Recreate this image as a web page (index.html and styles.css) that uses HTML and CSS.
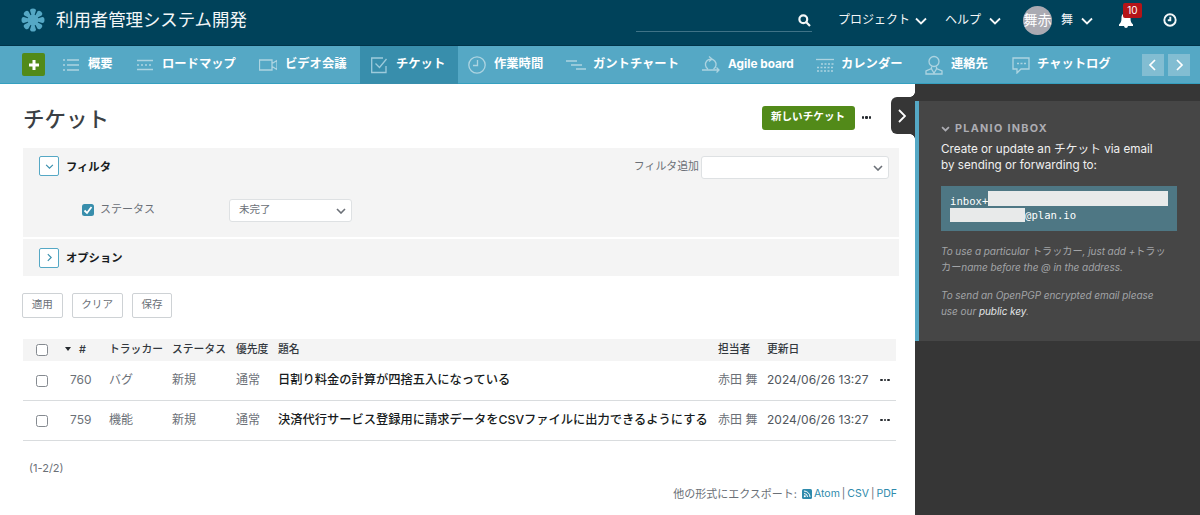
FILE: index.html
```html
<!DOCTYPE html>
<html lang="ja">
<head>
    <meta charset="UTF-8">
    <meta name="viewport" content="width=device-width, initial-scale=1.0">
    <title>チケット - 利用者管理システム開発</title>
    <link rel="stylesheet" href="styles.css">
</head>
<body>
    <header class="top-bar">
        <svg class="logo" viewBox="0 0 24 24">
            <path id="petal" d="M12 12L9.100 2.800Q9 .5 12 .5Q15 .5 14.900 2.800Z"/>
            <use href="#petal" transform="rotate(45 12 12)"/>
            <use href="#petal" transform="rotate(90 12 12)"/>
            <use href="#petal" transform="rotate(135 12 12)"/>
            <use href="#petal" transform="rotate(180 12 12)"/>
            <use href="#petal" transform="rotate(225 12 12)"/>
            <use href="#petal" transform="rotate(270 12 12)"/>
            <use href="#petal" transform="rotate(315 12 12)"/>
            <circle cx="12" cy="12" r="5.500"/>
        </svg>
        <div class="project-name">利用者管理システム開発</div>
        <div class="search">
            <svg width="13" height="13" viewBox="0 0 13 13"><circle cx="5.3" cy="5.3" r="3.9"/><path d="M8.3 8.3L12 12"/></svg>
        </div>
        <a class="top-link projects">プロジェクト<svg class="chevron" viewBox="0 0 12 8"><path d="M1 1.5L6 6.5L11 1.5"/></svg></a>
        <a class="top-link help">ヘルプ<svg class="chevron" viewBox="0 0 12 8"><path d="M1 1.5L6 6.5L11 1.5"/></svg></a>
        <span class="avatar">舞赤</span>
        <a class="top-link user">舞<svg class="chevron" viewBox="0 0 12 8"><path d="M1 1.5L6 6.5L11 1.5"/></svg></a>
        <div class="bell">
            <svg width="16" height="17" viewBox="0 0 16 17"><path d="M8 1C4.500 1 3.500 3.500 3.500 6C3.500 9.500 2.800 11 1 12.500V14H6Q6.300 16 8 16Q9.700 16 10 14H15V12.500C13.200 11 12.500 9.500 12.500 6C12.500 3.500 11.500 1 8 1Z"/></svg>
            <span class="badge">10</span>
        </div>
        <svg class="timer" viewBox="0 0 14 14"><circle cx="7" cy="7" r="5.7"/><path d="M7.300 3.800V7.300H4.800"/></svg>
    </header>

    <nav class="main-menu">
        <a class="add"><svg width="10" height="10" viewBox="0 0 10 10"><path d="M5 0V10M0 5H10"/></svg></a>
        <a class="item overview"><svg viewBox="0 0 18 18"><path d="M0 4h2M4 4H16M0 9h2M4 9H16M0 14h2M4 14H16"/></svg>概要</a>
        <a class="item roadmap"><svg viewBox="0 0 18 18"><path d="M0 4.500H16M0 13.500H16"/><path d="M0 9H16" stroke-dasharray="2 2"/></svg>ロードマップ</a>
        <a class="item video"><svg viewBox="0 0 18 18"><path d="M.5 4H13V14H.5ZM13 7.500L18 4.500V13.500L13 10.500"/></svg>ビデオ会議</a>
        <a class="item tickets active"><svg viewBox="0 0 18 18"><path d="M12 2H.7V16.500H15V10M4.500 7.500L8.500 11.500L15.500 3"/></svg>チケット</a>
        <a class="item time"><svg viewBox="0 0 18 18"><circle cx="9" cy="9" r="8.200"/><path d="M9.500 4V9.500H5"/></svg>作業時間</a>
        <a class="item gantt"><svg viewBox="0 0 20 18"><path d="M0 5H11M5 9H16M10 13H20"/></svg>ガントチャート</a>
        <a class="item agile"><svg viewBox="0 0 18 18"><path d="M6 13A5.300 5.300 0 1 1 11.500 13M7 .5L10 3L7 5.500M0 14H17M14.500 11.500L17 14L14.500 16.500"/></svg>Agile board</a>
        <a class="item calendar"><svg viewBox="0 0 18 18"><path d="M0 3.500H18"/><path d="M5 8H18M1 11.500H18M1 15H18" stroke-dasharray="2 1.500"/></svg>カレンダー</a>
        <a class="item contacts"><svg viewBox="0 0 18 20"><circle cx="9" cy="6.500" r="5"/><path d="M6.500 11.500V13.500L1 16V19H17V16L11.500 13.500V11.500M6.500 14L9 18L11.500 14"/></svg>連絡先</a>
        <a class="item chat"><svg viewBox="0 0 18 18"><path d="M1 2H17V13H9L5 17V13H1Z"/><path d="M5 7.500H14" stroke-dasharray="2 1.500"/></svg>チャットログ</a>
        <div class="scroll-buttons">
            <a><svg viewBox="0 0 12 12"><path d="M8 1L3 6L8 11"/></svg></a>
            <a><svg viewBox="0 0 12 12"><path d="M4 1L9 6L4 11"/></svg></a>
        </div>
    </nav>

    <div class="page">
        <main>
            <a class="sidebar-toggle"><svg viewBox="0 0 8 14"><path d="M1 1L7 7L1 13"/></svg></a>
            <div class="heading">
                <h1>チケット</h1>
                <a class="new-ticket">新しいチケット</a>
                <span class="dots"><i></i><i></i><i></i></span>
            </div>

            <section class="filters">
                <div class="legend">
                    <span class="toggle"><svg viewBox="0 0 8 8"><path d="M1 2.500L4 5.500L7 2.500"/></svg></span>
                    <b>フィルタ</b>
                    <span class="add-filter">フィルタ追加</span>
                    <span class="select wide"><svg class="arrow" viewBox="0 0 10 6"><path d="M1 1L5 5L9 1"/></svg></span>
                </div>
                <div class="filter-row">
                    <span class="checkbox checked"><svg viewBox="0 0 12 12"><path d="M2.500 6.500L5 9L9.500 3"/></svg></span>
                    <span class="filter-name">ステータス</span>
                    <span class="select">未完了<svg class="arrow" viewBox="0 0 10 6"><path d="M1 1L5 5L9 1"/></svg></span>
                </div>
            </section>
            <section class="options">
                <span class="toggle"><svg viewBox="0 0 8 8"><path d="M2.500 1L5.500 4L2.500 7"/></svg></span>
                <b>オプション</b>
            </section>

            <div class="buttons">
                <a>適用</a>
                <a>クリア</a>
                <a>保存</a>
            </div>

            <table class="issues">
                <colgroup>
                    <col class="c-check"><col class="c-id"><col class="c-tracker"><col class="c-status"><col class="c-priority"><col><col class="c-assignee"><col class="c-updated"><col class="c-menu">
                </colgroup>
                <thead>
                    <tr>
                        <th><span class="checkbox"></span></th>
                        <th class="id"><span class="sort"></span>#</th>
                        <th>トラッカー</th>
                        <th>ステータス</th>
                        <th>優先度</th>
                        <th>題名</th>
                        <th>担当者</th>
                        <th>更新日</th>
                        <th></th>
                    </tr>
                </thead>
                <tbody>
                    <tr>
                        <td><span class="checkbox"></span></td>
                        <td class="id">760</td>
                        <td>バグ</td>
                        <td>新規</td>
                        <td>通常</td>
                        <td class="subject">日割り料金の計算が四捨五入になっている</td>
                        <td>赤田 舞</td>
                        <td class="updated">2024/06/26 13:27</td>
                        <td><span class="dots"><i></i><i></i><i></i></span></td>
                    </tr>
                    <tr>
                        <td><span class="checkbox"></span></td>
                        <td class="id">759</td>
                        <td>機能</td>
                        <td>新規</td>
                        <td>通常</td>
                        <td class="subject">決済代行サービス登録用に請求データをCSVファイルに出力できるようにする</td>
                        <td>赤田 舞</td>
                        <td class="updated">2024/06/26 13:27</td>
                        <td><span class="dots"><i></i><i></i><i></i></span></td>
                    </tr>
                </tbody>
            </table>

            <div class="pagination">(1-2/2)</div>
            <div class="export">
                <span class="export-label">他の形式にエクスポート:</span>
                <svg class="rss" viewBox="0 0 10 10"><rect width="10" height="10" rx="1.500"/><circle cx="2.800" cy="7.200" r="1"/><path d="M2 4.500A3.500 3.500 0 0 1 5.500 8M2 2A6 6 0 0 1 8 8"/></svg>
                <a>Atom</a><span>|</span><a>CSV</a><span>|</span><a>PDF</a>
            </div>
        </main>

        <aside>
            <div class="inbox">
                <h3><svg viewBox="0 0 10 7"><path d="M1 1.200L5 5.200L9 1.200"/></svg>PLANIO INBOX</h3>
                <p class="lead">Create or update an チケット via email<br>by sending or forwarding to:</p>
                <div class="address">
                    <div>inbox+<span class="mask long"></span></div>
                    <div><span class="mask short"></span>@plan.io</div>
                </div>
                <p class="hint">To use a particular <span>トラッカー</span>, just add +<span>トラッ</span><br><span>カー</span>name before the @ in the address.</p>
                <p class="hint">To send an OpenPGP encrypted email please<br>use our <a>public key</a>.</p>
            </div>
        </aside>
    </div>
</body>
</html>
```
FILE: styles.css
```css
* {
    box-sizing: border-box;
}

body {
    margin: 0;
    height: 515px;
    overflow: hidden;
    font-family: Inter, "Noto Sans CJK JP", sans-serif;
    font-size: 12px;
    line-height: 16px;
    color: #6b7077;
    white-space: nowrap;
}

svg {
    display: block;
    flex: none;
    fill: none;
    stroke: currentColor;
}

h1, h3, p {
    margin: 0;
}

.top-bar {
    display: flex;
    align-items: center;
    height: 46px;
    padding: 0 0 5px 21px;
    background-color: #00425a;
    border-bottom: 1px solid #00344a;
    color: #f4f7f8;
}

.logo {
    width: 24px;
    height: 24px;
    fill: #55a8c5;
    stroke: none;
}

.project-name {
    width: 591px;
    padding-left: 11px;
    font-size: 17.4px;
    line-height: 24px;
    margin-top: -1px;
}

.search {
    display: flex;
    justify-content: flex-end;
    width: 176px;
    height: 23px;
    padding: 5px 1px 0 0;
    border-bottom: 1px solid #3f7387;
    stroke-width: 2.2;
}

.top-link {
    display: flex;
    align-items: center;
    justify-content: space-between;
}

.chevron {
    width: 12px;
    height: 8px;
    stroke-width: 1.8;
    margin-top: 2px;
}

.projects {
    width: 89px;
    margin-left: 26px;
}

.help {
    width: 56px;
    margin-left: 18px;
}

.avatar {
    width: 29px;
    height: 29px;
    margin-left: 22px;
    border-radius: 50%;
    background-color: #aaaab2;
    color: #fff;
    font-size: 14px;
    line-height: 28px;
    text-align: center;
}

.user {
    width: 32px;
    margin-left: 9px;
}

.bell {
    position: relative;
    margin-left: 25px;
}

.bell svg {
    fill: #fff;
    stroke: none;
}

.badge {
    position: absolute;
    left: 5px;
    top: -9px;
    width: 19px;
    height: 15px;
    border-radius: 2px;
    background-color: #b51418;
    color: #fff;
    font-size: 10px;
    line-height: 15px;
    text-align: center;
}

.timer {
    width: 14px;
    height: 14px;
    margin-left: 29px;
    stroke-width: 1.9;
}

.main-menu {
    display: flex;
    height: 38px;
    padding-left: 22px;
    background-color: #55a8c5;
    border-bottom: 1px solid #35a0c0;
    color: #fff;
    font-weight: 700;
    font-size: 12.3px;
}

.add {
    display: flex;
    align-items: center;
    justify-content: center;
    width: 23px;
    height: 23px;
    margin: 7px 7px 0 0;
    border-radius: 2px;
    background-color: #528a19;
    stroke-width: 3;
}

.item {
    display: flex;
    align-items: center;
    height: 38px;
    padding: 0 0 2px 11px;
}

.item svg {
    width: 18px;
    height: 18px;
    margin: 2px 7px 0 0;
    color: #add4e1;
    stroke-width: 1.3;
}

.item.active {
    background-color: #388eac;
}

.item.active svg {
    color: #9dcbdc;
}

.overview { width: 74px; }
.roadmap { width: 122px; }
.video { width: 112px; }
.tickets { width: 98px; }
.time { width: 98px; padding-left: 10px; }
.agile { width: 114px; font-size: 11.8px; }
.calendar { width: 109px; }
.contacts { width: 87px; }
.chat { width: 141px; }

.video svg {
    margin-right: 8px;
}

.agile svg {
    margin-right: 8px;
}

.time svg {
    margin-right: 8px;
}

.gantt {
    width: 135px;
    padding-left: 10px;
}

.gantt svg, .contacts svg {
    height: 20px;
    width: 20px;
    margin-right: 7px;
}

.contacts {
    padding-left: 10px;
}

.scroll-buttons {
    display: flex;
    gap: 4px;
    padding-top: 8px;
}

.scroll-buttons a {
    display: flex;
    align-items: center;
    justify-content: center;
    width: 22px;
    height: 22px;
    background-color: #82bdd2;
}

.scroll-buttons svg {
    width: 12px;
    height: 12px;
    stroke-width: 1.7;
}

.page {
    display: flex;
    height: 431px;
    background-color: #363636;
}

main {
    position: relative;
    width: 915px;
    padding: 22px 16px 0 23px;
    background-color: #fff;
}

.sidebar-toggle {
    position: absolute;
    right: 0;
    top: 13px;
    width: 24px;
    height: 37px;
    padding: 12px 0 0 7px;
    border-radius: 6px 0 0 6px;
    background-color: #363636;
    color: #fff;
}

.sidebar-toggle svg {
    width: 8px;
    height: 14px;
    stroke-width: 1.8;
}

.sidebar-toggle:before,
.sidebar-toggle:after {
    content: '';
    position: absolute;
    right: 0;
    width: 5px;
    height: 5px;
}

.sidebar-toggle:before {
    top: -5px;
    background: radial-gradient(circle at 0 0, transparent 4.5px, #363636 5px);
}

.sidebar-toggle:after {
    bottom: -5px;
    background: radial-gradient(circle at 0 100%, transparent 4.5px, #363636 5px);
}

.heading {
    display: flex;
    height: 42px;
}

h1 {
    flex: 1;
    font-size: 21.5px;
    font-weight: 500;
    line-height: 26px;
    color: #3b3f44;
}

.new-ticket {
    width: 93px;
    height: 24px;
    border-radius: 3px;
    background-color: #528a19;
    color: #fff;
    font-weight: 700;
    font-size: 10.6px;
    line-height: 22px;
    text-align: center;
}

.dots {
    display: flex;
    gap: 1px;
}

.dots i {
    width: 2.5px;
    height: 2.5px;
    border-radius: 1px;
    background-color: #25292e;
}

.heading .dots {
    margin: 10px 28px 0 7px;
}

.filters {
    height: 89px;
    margin-bottom: 2px;
    padding: 8px 10px 0 16px;
    background-color: #f4f4f4;
}

.legend, .filter-row, .options {
    display: flex;
    align-items: center;
}

b {
    color: #171b20;
    font-weight: 700;
    font-size: 11.3px;
}

.legend b {
    margin-top: -2px;
}

.toggle {
    display: flex;
    align-items: center;
    justify-content: center;
    width: 20px;
    height: 20px;
    margin-right: 7px;
    border: 1px solid #55a8c5;
    border-radius: 2px;
    background-color: #fff;
    color: #388eac;
}

.toggle svg {
    width: 9px;
    height: 9px;
}

.legend .toggle {
    margin-top: -3px;
}

.add-filter {
    margin: -3px 2px 0 auto;
    font-size: 10.9px;
}

.select {
    display: flex;
    align-items: center;
    justify-content: space-between;
    width: 123px;
    height: 23px;
    padding: 0 5px 2px 9px;
    border: 1px solid #dee1e3;
    border-radius: 3px;
    background-color: #fff;
    font-size: 10.5px;
}

.select.wide {
    width: 188px;
    justify-content: flex-end;
}

.arrow {
    width: 10px;
    height: 6px;
    margin-top: 3px;
    stroke-width: 1.6;
}

.filter-row {
    padding: 20px 0 0 43px;
}

.checkbox {
    display: block;
    width: 12px;
    height: 12px;
    border: 1px solid #858a90;
    border-radius: 2.5px;
    background-color: #fff;
}

.checkbox.checked {
    border: 0;
    background-color: #388eac;
    color: #fff;
    stroke-width: 1.8;
}

.filter-name {
    width: 129px;
    margin: -4px 0 0 6px;
    font-size: 11px;
}

.filter-row .checkbox {
    margin-top: -2px;
}

.options {
    height: 37px;
    padding-left: 16px;
    background-color: #f4f4f4;
}

.buttons {
    display: flex;
    gap: 9px;
    margin: 17px 0 20px -1px;
}

.buttons a {
    height: 25px;
    padding: 0 8.7px;
    border: 1px solid #ced2d5;
    border-radius: 2px;
    font-size: 10.6px;
    line-height: 21px;
}

.issues {
    width: 873px;
    margin-top: 21px;
    table-layout: fixed;
    border-collapse: separate;
    border-spacing: 0;
}

.c-check { width: 42px; }
.c-id { width: 44px; }
.c-tracker { width: 63px; }
.c-status { width: 64px; }
.c-priority { width: 42px; }
.c-assignee { width: 49px; }
.c-updated { width: 113px; }
.c-menu { width: 16px; }

.issues th {
    height: 22px;
    padding: 0 0 1px;
    background-color: #f4f4f4;
    color: #33383e;
    font-size: 10.8px;
    font-weight: 500;
    line-height: 16px;
    text-align: left;
}

.issues td {
    height: 40px;
    padding: 0 0 1px;
    border-bottom: 1px solid #d9dcde;
}

.issues .checkbox {
    margin: 2px 0 0 13px;
}

.issues th .checkbox {
    margin-top: 1px;
}

.issues td.id {
    padding-left: 5px;
}

.issues td.subject {
    font-size: 12.25px;
    font-weight: 500;
    color: #171b20;
}

.issues td.updated {
    color: #50565d;
}

.issues .dots {
    margin-left: 0;
}

.sort {
    display: inline-block;
    margin: 0 8px 2px 0;
    border: 3px solid transparent;
    border-top: 4px solid #25292e;
    border-bottom: 0;
}

.pagination {
    margin: 19px 0 10px 6px;
    font-size: 11px;
}

.export {
    display: flex;
    align-items: center;
    justify-content: flex-end;
    gap: 2px;
    margin-right: 2px;
    font-size: 10.5px;
}

.export a {
    color: #2e8aac;
}

.export-label {
    margin-right: 3px;
    font-size: 11px;
}

.rss {
    width: 10px;
    height: 10px;
}

.rss rect {
    fill: #2e8aac;
    stroke: none;
}

.rss circle {
    fill: #fff;
    stroke: none;
}

.rss path {
    stroke: #fff;
}

aside {
    flex: 1;
    padding-top: 17px;
}

.inbox {
    height: 240px;
    padding: 20px 0 0 22px;
    border-left: 4px solid #55a8c5;
    background-color: #464646;
}

h3 {
    display: flex;
    align-items: center;
    color: #adadb3;
    font-size: 10.8px;
    font-weight: 700;
    letter-spacing: 1.3px;
    line-height: 16px;
}

h3 svg {
    width: 9px;
    height: 6px;
    margin-right: 5px;
    stroke-width: 2;
}

.lead {
    margin-top: 4px;
    color: #f0f0f0;
    font-size: 11.7px;
}

.address {
    width: 236px;
    height: 45px;
    margin: 13px 0 12px;
    padding: 8px 9px;
    background-color: #4e7784;
    color: #fff;
    font-family: "DejaVu Sans Mono", monospace;
    font-size: 10.6px;
    line-height: 14px;
}

.address div {
    display: flex;
}

.mask {
    height: 14px;
    background-color: #e8eaea;
}

.long {
    width: 182px;
    height: 15px;
    margin: -3px 0 2px;
}

.short {
    width: 75px;
}

.hint {
    margin-bottom: 12px;
    color: #a2a4a7;
    font-size: 10px;
    font-style: italic;
    letter-spacing: -0.05px;
}

.hint span {
    font-size: 10.2px;
    font-style: normal;
    line-height: 1;
}

.hint a {
    color: #e2e5e6;
}
```
